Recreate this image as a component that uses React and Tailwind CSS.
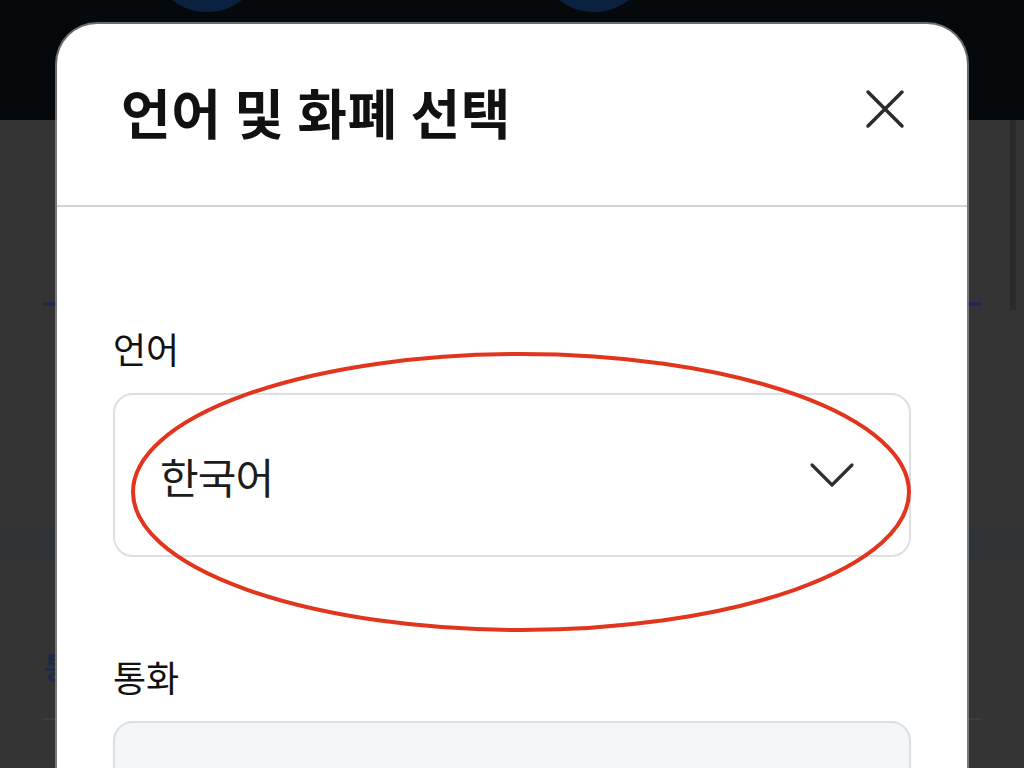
import { useState } from "react";

const kr = { fontFamily: '"Noto Sans CJK KR", "Noto Sans", sans-serif' };

function CloseIcon() {
  return (
    <svg width="40" height="40" viewBox="0 0 40 40" fill="none" stroke="#2b2b2b" strokeWidth="3.5" strokeLinecap="round">
      <path d="M3 3 L37 37 M37 3 L3 37" />
    </svg>
  );
}

function Chevron() {
  return (
    <svg width="46" height="28" viewBox="0 0 46 28" fill="none" stroke="#2f2f2f" strokeWidth="3.2" strokeLinecap="round" strokeLinejoin="round">
      <path d="M3 4 L23 24 L43 4" />
    </svg>
  );
}

function SelectBox({ value, filled }) {
  return (
    <div
      className={`h-[164px] rounded-[20px] border-2 border-[#dcdfe3] flex items-center justify-between pl-[45px] pr-[54px] ${
        filled ? "bg-[#f4f7f9]" : "bg-white"
      }`}
    >
      <span className="text-[42px] text-[#1c1c1c] tracking-[-0.02em]">{value}</span>
      {value && <Chevron />}
    </div>
  );
}

export default function App() {
  const [lang] = useState("한국어");

  return (
    <div className="relative w-full h-[768px] overflow-hidden bg-[#343434]" style={kr}>
      {/* page behind the dim layer */}
      <div className="relative h-[120px] bg-[#06090c] overflow-hidden">
        <div className="absolute left-[150px] top-[-102px] w-[114px] h-[114px] rounded-full bg-[#0b2140]" />
        <div className="absolute left-[537px] top-[-102px] w-[114px] h-[114px] rounded-full bg-[#0b2140]" />
      </div>
      <div className="flex justify-end pr-[8px]">
        <div className="w-[6px] h-[190px] bg-[#2a2a2a]" />
      </div>
      <div className="mx-[43px] -mt-[8px] h-[4px] bg-[#1b2a45]" />
      <div className="mt-[220px] h-[36px] bg-[#303436]" />
      <div className="ml-[44px] mt-[88px] text-[30px] font-bold text-[#1d2a44] leading-none">통</div>
      <div className="mx-[43px] mt-[38px] h-[2px] bg-[#3d3d3d]" />

      {/* modal */}
      <div className="absolute left-[57px] top-[24px] w-[910px] h-[820px] rounded-[40px] bg-white shadow-[0_0_0_2px_rgba(150,150,150,0.7)]">
        <div className="h-[181px] flex items-center justify-between pl-[64px] pr-[62px] pb-[6px]">
          <h1 className="text-[54px] leading-none font-bold text-[#111] tracking-[0.01em]">언어 및 화폐 선택</h1>
          <button className="flex p-0 -mt-[6px]">
            <CloseIcon />
          </button>
        </div>
        <div className="h-[2px] bg-[#cfd5da]" />
        <div className="px-[56px]">
          <div className="mt-[115px] text-[36px] text-[#111] leading-[52px]">언어</div>
          <div className="mt-[19px]">
            <SelectBox value={lang} />
          </div>
          <div className="mt-[93px] text-[36px] text-[#111] leading-[52px]">통화</div>
          <div className="mt-[19px]">
            <SelectBox value="" filled />
          </div>
        </div>
      </div>

      {/* red marker ring */}
      <svg className="absolute left-0 top-0 pointer-events-none" width="1024" height="768">
        <ellipse cx="521" cy="492" rx="388" ry="138" fill="none" stroke="#e1361d" strokeWidth="4" />
      </svg>
    </div>
  );
}
